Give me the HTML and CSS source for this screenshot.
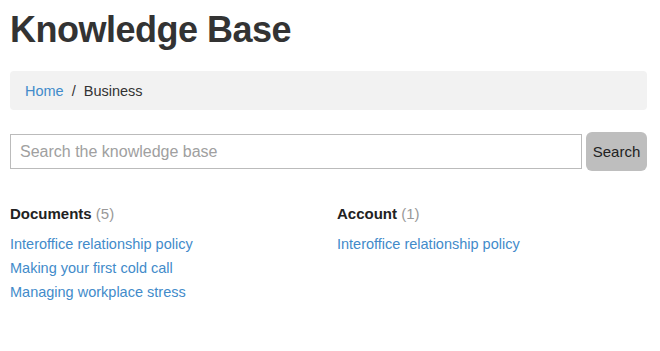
FILE: index.html
```html
<!DOCTYPE html>
<html lang="en">
<head>
  <meta charset="UTF-8" />
  <meta name="viewport" content="width=device-width, initial-scale=1.0"/>
  <title>Knowledge Base</title>
  <link rel="stylesheet" href="styles.css">
</head>
<body>
  <div class="page">
    <h1>Knowledge Base</h1>
    <ol class="breadcrumb">
      <li><a href="#">Home</a></li>
      <li class="sep">/</li>
      <li>Business</li>
    </ol>
    <form class="search-form" onsubmit="return false">
      <input class="search-input" type="text" placeholder="Search the knowledge base">
      <button class="search-button" type="submit">Search</button>
    </form>
    <div class="categories">
      <div class="category">
        <h3>Documents <span class="count">(5)</span></h3>
        <ul>
          <li><a href="#">Interoffice relationship policy</a></li>
          <li><a href="#">Making your first cold call</a></li>
          <li><a href="#">Managing workplace stress</a></li>
        </ul>
      </div>
      <div class="category">
        <h3>Account <span class="count">(1)</span></h3>
        <ul>
          <li><a href="#">Interoffice relationship policy</a></li>
        </ul>
      </div>
    </div>
  </div>
</body>
</html>
```

FILE: styles.css
```css
* { margin: 0; padding: 0; box-sizing: border-box; }
body {
  font-family: "Liberation Sans", Arial, sans-serif;
  font-size: 14px;
  line-height: 20px;
  color: #333;
  background: #fff;
}
a { color: #428bca; text-decoration: none; }
.page { padding: 10px 13px 0 10px; }
h1 {
  font-size: 36px;
  font-weight: bold;
  letter-spacing: -0.5px;
  line-height: 40px;
  margin-bottom: 21px;
}
.breadcrumb {
  list-style: none;
  display: flex;
  gap: 8px;
  font-size: 14.5px;
  background-color: #f2f2f2;
  border-radius: 4px;
  padding: 10px 15px 9px;
  margin-bottom: 22px;
}
.search-form {
  display: flex;
  align-items: center;
  gap: 4px;
  margin-bottom: 33px;
}
.search-input {
  flex: 1;
  height: 35px;
  border: 1px solid #bbb;
  padding: 0 9px;
  font-family: inherit;
  font-size: 16px;
  color: #333;
}
.search-input::placeholder { color: #a0a0a0; }
.search-button {
  width: 61px;
  height: 39px;
  border: none;
  border-radius: 6px;
  background-color: #bebebe;
  color: #222;
  font-family: inherit;
  font-size: 15px;
}
.categories {
  display: grid;
  grid-template-columns: 327px 1fr;
}
h3 {
  font-size: 15px;
  font-weight: bold;
  color: #222;
  line-height: 20px;
  margin-bottom: 8px;
}
.count { font-weight: normal; color: #999; }
ul { list-style: none; font-size: 14.5px; }
ul li { line-height: 24px; }
```
